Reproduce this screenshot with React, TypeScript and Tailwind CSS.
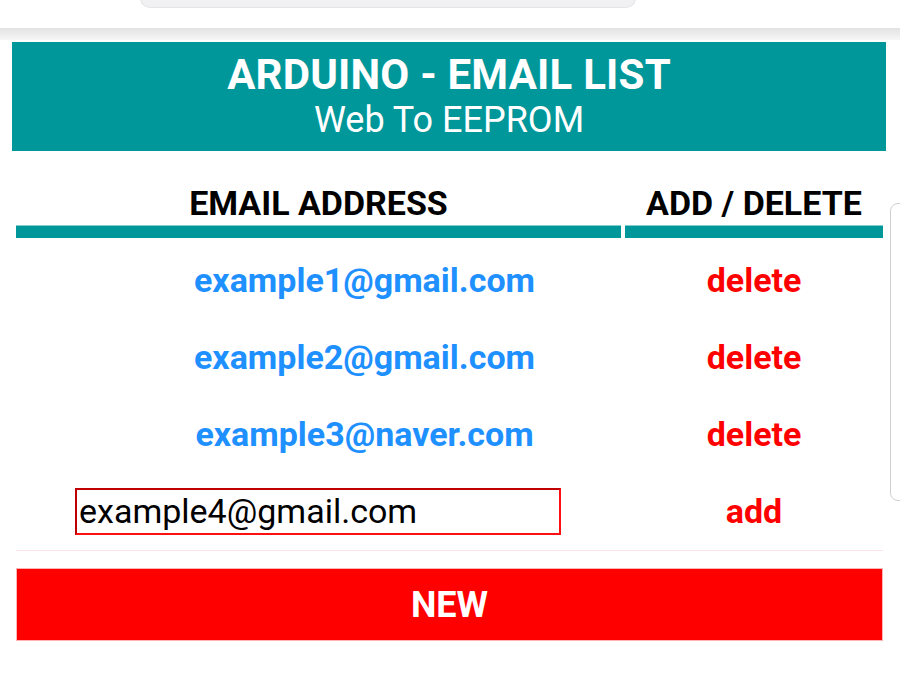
import React from "react";

const emails = ["example1@gmail.com", "example2@gmail.com", "example3@naver.com"];

export default function App() {
  return (
    <div
      className="relative w-[900px] h-[675px] overflow-hidden bg-white"
      style={{ fontFamily: "Roboto, 'Liberation Sans', sans-serif" }}
    >
      {/* browser chrome: address pill and toolbar shadow */}
      <div className="h-[28px] flex">
        <div className="ml-[140px] w-[496px] h-[10px] -mt-[2px] rounded-b-[14px] bg-[#f1f1f3] border-b border-x border-[#e4e4e8]" />
      </div>
      <div className="h-[12px] bg-gradient-to-b from-[#e2e2e2] to-[#f7f7f7]" />
      <div className="h-[2px]" />

      {/* page header */}
      <div className="ml-[12px] mr-[14px] h-[109px] bg-[#00979a] flex flex-col items-center justify-center text-white">
        <div className="text-[42px] font-bold leading-[46px] tracking-[0.2px]">ARDUINO - EMAIL LIST</div>
        <div className="text-[36px] leading-[44px]">Web To EEPROM</div>
      </div>

      {/* email table */}
      <div className="ml-[16px] w-[867px]">
        <div className="grid grid-cols-[605px_258px] gap-x-[4px] pt-[32px]">
          <div className="text-center text-[34px] font-bold text-black leading-[40px]">EMAIL ADDRESS</div>
          <div className="text-center text-[34px] font-bold text-black leading-[40px]">ADD / DELETE</div>
          <div className="h-[13px] mt-[2px] bg-[#00979a] border-t border-[#7fcfd1]" />
          <div className="h-[13px] mt-[2px] bg-[#00979a] border-t border-[#7fcfd1]" />
        </div>

        <div className="mt-[4px]">
          {emails.map((e) => (
            <div key={e} className="grid grid-cols-[605px_258px] gap-x-[4px] h-[77px] items-center">
              <div className="pl-[92px] text-center text-[34px] font-bold text-[#1e90ff]">{e}</div>
              <div className="text-center text-[34px] font-bold text-[#ff0000]">delete</div>
            </div>
          ))}
          <div className="grid grid-cols-[605px_258px] gap-x-[4px] h-[77px] items-center">
            <div className="pl-[59px]">
              <div className="w-[486px] h-[47px] border-2 border-[#ff1010] border-t-[#c00000] border-l-[#c00000] flex items-center pl-[2px] text-[34px] text-black">
                example4@gmail.com
              </div>
            </div>
            <div className="text-center text-[34px] font-bold text-[#ff0000]">add</div>
          </div>
        </div>

        <div className="h-px bg-[#fde4ea]" />

        <div className="mt-[17px] h-[73px] bg-[#ff0000] border border-[#ffb3b3] flex items-center justify-center">
          <span className="text-[36px] font-bold text-white">NEW</span>
        </div>
      </div>

      {/* scroll indicator */}
      <div className="absolute left-[890px] top-[203px] w-[20px] h-[298px] rounded-[8px] border border-[#cfcfcf] bg-white" />
    </div>
  );
}
